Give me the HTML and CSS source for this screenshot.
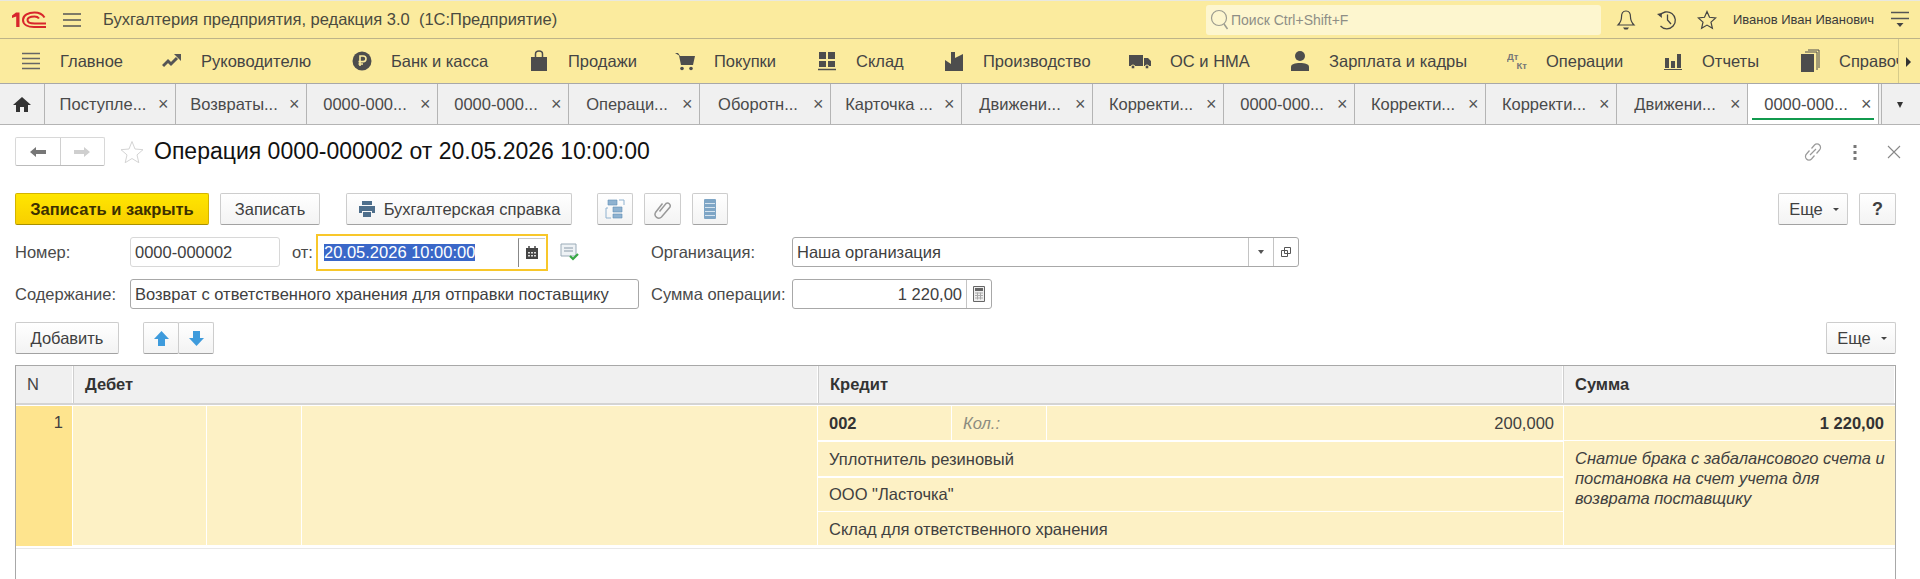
FILE: index.html
```html
<!DOCTYPE html>
<html lang="ru">

<head>
    <meta charset="UTF-8">
    <title>Операция 0000-000002</title>
    <link rel="stylesheet" href="styles.css">
</head>

<body>
    <header class="topBar">
        <svg class="logo" width="34" height="18" viewBox="0 0 34 18">
            <path d="M0 4.500 4 1.500h3.500V16H4.200V5.500L0 7z" fill="#d8262c" />
            <path d="M32.500 6.500C30.500 3.300 27 1.500 22.500 1.500 16.500 1.500 11 4 11 9s5.500 7 11 7H34" fill="none" stroke="#d8262c" stroke-width="2" />
            <path d="M27 7.500C26 6 24.500 5.500 22.500 5.500 19 5.500 15.500 6.500 15.500 9s3.500 3.500 7 3.500H34" fill="none" stroke="#d8262c" stroke-width="2" />
        </svg>
        <svg class="burger" width="18" height="14" viewBox="0 0 18 14"><path d="M0 1h18M0 7h18M0 13h18" stroke="#555" stroke-width="1.300" /></svg>
        <div class="appTitle">Бухгалтерия предприятия, редакция 3.0&nbsp; (1С:Предприятие)</div>
        <div class="searchBox">
            <svg width="21" height="23" viewBox="0 0 21 23"><circle cx="10" cy="10" r="7.500" fill="none" stroke="#9c9c90" stroke-width="1.200" /><path d="M15 16l3.500 5" stroke="#9c9c90" stroke-width="1.500" /></svg>
            <span>Поиск Ctrl+Shift+F</span>
        </div>
        <svg class="topIcon bell" width="20" height="22" viewBox="0 0 20 22"><path d="M10 2C6.500 2 5.500 5 5.500 8c0 4-1.500 6-3.500 8h16c-2-2-3.500-4-3.500-8 0-3-1-6-4.500-6z" fill="none" stroke="#444" stroke-width="1.200" /><path d="M7 18.500h6l-1.500 2h-3z" fill="#444" /></svg>
        <svg class="topIcon clock" width="22" height="22" viewBox="0 0 22 22"><path d="M3.500 7A8.500 8.500 0 1 1 4.500 17" fill="none" stroke="#444" stroke-width="1.300" /><path d="M1 5l4.500-1 .5 5z" fill="#444" /><path d="M11.500 5.500V11l3.500 4" fill="none" stroke="#444" stroke-width="1.300" /></svg>
        <svg class="topIcon star" width="20" height="20" viewBox="0 0 20 20"><path d="M10 1.500l2.500 5.800 6.200.6-4.700 4.200 1.400 6.200L10 15.100l-5.400 3.200L6 12.100 1.300 7.900l6.200-.6z" fill="none" stroke="#444" stroke-width="1.200" /></svg>
        <div class="userName">Иванов Иван Иванович</div>
        <svg class="topIcon settings" width="18" height="18" viewBox="0 0 18 18"><path d="M0 1.500h18M0 7.500h18" stroke="#555" stroke-width="1.300" /><path d="M5.500 12h7L9 16z" fill="#444" /></svg>
    </header>

    <nav class="menuBar">
        <div class="menuItem">
            <svg width="20" height="20" viewBox="0 0 20 20"><path d="M1 2.500h18M1 7.500h18M1 12.500h18M1 17.500h18" stroke="#666" stroke-width="1.300" /></svg>
            <span>Главное</span>
        </div>
        <div class="menuItem">
            <svg width="20" height="20" viewBox="0 0 20 20"><path d="M1 15l5-5 3 3 6-6" fill="none" stroke="#555" stroke-width="3" /><path d="M12 3h7v7z" fill="#555" /></svg>
            <span>Руководителю</span>
        </div>
        <div class="menuItem">
            <svg width="20" height="20" viewBox="0 0 20 20"><circle cx="10" cy="10" r="9.500" fill="#4d4d4d" /><path d="M8 15V5h3.200a2.800 2.800 0 0 1 0 5.600H6.500M6.500 13H11" fill="none" stroke="#fbeb9e" stroke-width="1.600" /></svg>
            <span>Банк и касса</span>
        </div>
        <div class="menuItem">
            <svg width="20" height="22" viewBox="0 0 20 22"><path d="M2 7h16v14H2z" fill="#4d4d4d" /><path d="M6.500 11V4a3.500 3 0 0 1 7 0v7" fill="none" stroke="#4d4d4d" stroke-width="1.500" /></svg>
            <span>Продажи</span>
        </div>
        <div class="menuItem">
            <svg width="20" height="20" viewBox="0 0 20 20"><path d="M0 2h3l2 3h15l-2 9H6L4 4.500z" fill="#4d4d4d" /><circle cx="7" cy="17.500" r="1.800" fill="#4d4d4d" /><circle cx="16" cy="17.500" r="1.800" fill="#4d4d4d" /></svg>
            <span>Покупки</span>
        </div>
        <div class="menuItem">
            <svg width="20" height="20" viewBox="0 0 20 20"><path d="M2 1h7v7H2zM11 1h7v7h-7zM2 10h7v6H2zM11 10h7v6h-7z" fill="#4d4d4d" /><path d="M1 18.500h18" stroke="#4d4d4d" stroke-width="1.500" /></svg>
            <span>Склад</span>
        </div>
        <div class="menuItem">
            <svg width="20" height="20" viewBox="0 0 20 20"><path d="M1 20V9l6 4V1h4v6l8-4v17z" fill="#4d4d4d" /></svg>
            <span>Производство</span>
        </div>
        <div class="menuItem">
            <svg width="22" height="20" viewBox="0 0 22 20"><path d="M0 4h14v11H0zM15 7h4l3 3v5h-7z" fill="#4d4d4d" /><circle cx="4" cy="16" r="2" fill="#4d4d4d" stroke="#fbeb9e" /><circle cx="18" cy="16" r="2" fill="#4d4d4d" stroke="#fbeb9e" /></svg>
            <span>ОС и НМА</span>
        </div>
        <div class="menuItem">
            <svg width="20" height="22" viewBox="0 0 20 22"><circle cx="10" cy="6" r="5" fill="#4d4d4d" /><path d="M1 21v-4c0-3 4-4 9-4s9 1 9 4v4z" fill="#4d4d4d" /></svg>
            <span>Зарплата и кадры</span>
        </div>
        <div class="menuItem">
            <div class="dtKt"><span>Дт</span><span>Кт</span></div>
            <span>Операции</span>
        </div>
        <div class="menuItem">
            <svg width="20" height="20" viewBox="0 0 20 20"><path d="M2 7h4v10H2zM8 10h4v7H8zM14 3h4v14h-4z" fill="#4d4d4d" /><path d="M1 18.500h18" stroke="#4d4d4d" /></svg>
            <span>Отчеты</span>
        </div>
        <div class="menuItem">
            <svg width="20" height="24" viewBox="0 0 20 24"><path d="M1 5h13v18H1z" fill="#4d4d4d" /><path d="M5 3h12v18M8 1h11v18" fill="none" stroke="#4d4d4d" /></svg>
            <span>Справочники</span>
        </div>
        <div class="menuArrow"></div>
    </nav>

    <div class="tabBar">
        <div class="homeTab">
            <svg width="18" height="16" viewBox="0 0 18 16"><path d="M9 1 0 9h3v7h4v-5h4v5h4V9h3z" fill="#333" /></svg>
        </div>
        <div class="tab"><span class="tabText">Поступле...</span><span class="tabClose">×</span></div>
        <div class="tab"><span class="tabText">Возвраты...</span><span class="tabClose">×</span></div>
        <div class="tab"><span class="tabText">0000-000...</span><span class="tabClose">×</span></div>
        <div class="tab"><span class="tabText">0000-000...</span><span class="tabClose">×</span></div>
        <div class="tab"><span class="tabText">Операци...</span><span class="tabClose">×</span></div>
        <div class="tab"><span class="tabText">Оборотн...</span><span class="tabClose">×</span></div>
        <div class="tab"><span class="tabText">Карточка ...</span><span class="tabClose">×</span></div>
        <div class="tab"><span class="tabText">Движени...</span><span class="tabClose">×</span></div>
        <div class="tab"><span class="tabText">Корректи...</span><span class="tabClose">×</span></div>
        <div class="tab"><span class="tabText">0000-000...</span><span class="tabClose">×</span></div>
        <div class="tab"><span class="tabText">Корректи...</span><span class="tabClose">×</span></div>
        <div class="tab"><span class="tabText">Корректи...</span><span class="tabClose">×</span></div>
        <div class="tab"><span class="tabText">Движени...</span><span class="tabClose">×</span></div>
        <div class="tab activeTab"><span class="tabText">0000-000...</span><span class="tabClose">×</span></div>
        <div class="tabMore"></div>
    </div>

    <main class="formView">
        <div class="titleRow">
            <div class="navButtons">
                <div class="navButton">
                    <svg width="16" height="10" viewBox="0 0 16 10"><path d="M0 5l6-5v3h10v4H6v3z" fill="#777" /></svg>
                </div>
                <div class="navButton">
                    <svg width="16" height="10" viewBox="0 0 16 10"><path d="M16 5l-6-5v3H0v4h10v3z" fill="#cfcfcf" /></svg>
                </div>
            </div>
            <svg class="titleStar" width="24" height="24" viewBox="0 0 24 24"><path d="M12 1.500l3 7.500 8 .7-6 5.200 1.800 7.800L12 18.500l-6.800 4.200L7 14.900 1 9.700 9 9z" fill="none" stroke="#d4d4d4" /></svg>
            <h1 class="formTitle">Операция 0000-000002 от 20.05.2026 10:00:00</h1>
            <div class="titleActions">
                <svg width="20" height="20" viewBox="0 0 20 20"><path d="M8.500 6.500l3-3.500a3.500 3.500 0 0 1 5 5l-3 3.500M11.500 13.500l-3 3.500a3.500 3.500 0 0 1-5-5l3-3.500M7 13l6-6" fill="none" stroke="#9a9a9a" stroke-width="1.200" /></svg>
                <svg width="6" height="18" viewBox="0 0 6 18"><path d="M1.500 2h3v3h-3zM1.500 8h3v3h-3zM1.500 14h3v3h-3z" fill="#777" /></svg>
                <svg width="14" height="14" viewBox="0 0 14 14"><path d="M1 1l12 12M13 1 1 13" stroke="#888" stroke-width="1.100" /></svg>
            </div>
        </div>

        <div class="toolbar">
            <button class="btn primaryBtn">Записать и закрыть</button>
            <button class="btn saveBtn">Записать</button>
            <button class="btn printBtn">
                <svg width="18" height="16" viewBox="0 0 18 16"><path d="M4 0h10v4H4zM1 5h16v7h-3v-2H4v2H1zM5 11h8v5H5z" fill="#4f6f8c" /></svg>
                Бухгалтерская справка
            </button>
            <button class="btn iconBtn structBtn">
                <svg width="20" height="20" viewBox="0 0 20 20"><path d="M3 1h9v5H3zM8 8h9v5H8zM8 15h9v4H8z" fill="#8fb2d0" stroke="#5f8db5" stroke-width=".6" /><path d="M3 9H1v10h5M14 1h5v5" fill="none" stroke="#8fb2d0" /></svg>
            </button>
            <button class="btn iconBtn clipBtn">
                <svg width="18" height="20" viewBox="0 0 18 20"><path d="M6 12l6.500-8a2.800 2.800 0 0 1 4 3.500L8 17.500a3.800 3.800 0 0 1-6-4.500L9 4" fill="none" stroke="#999" stroke-width="1.500" transform="translate(-.5 .5)" /></svg>
            </button>
            <button class="btn iconBtn listBtn">
                <svg width="12" height="20" viewBox="0 0 12 20"><path d="M0 1a1 1 0 0 1 1-1h10a1 1 0 0 1 1 1v18a1 1 0 0 1-1 1H1a1 1 0 0 1-1-1z" fill="#7fa6c6" /><path d="M1 4.500h10M1 8.500h10M1 12.500h10M1 16.500h10" stroke="#d6e4ef" /></svg>
            </button>
            <button class="btn moreBtn pushRight">Еще <i class="caret"></i></button>
            <button class="btn helpBtn">?</button>
        </div>

        <div class="fieldRow firstRow">
            <label class="fieldLabel numLabel">Номер:</label>
            <div class="field numField">0000-000002</div>
            <label class="fieldLabel dateLabel">от:</label>
            <div class="dateBox">
                <span class="selectedText">20.05.2026 10:00:00</span>
                <span class="dateBtn">
                    <svg width="12" height="13" viewBox="0 0 12 13"><path d="M0 2h12v11H0z" fill="#444" /><path d="M3 0v3M9 0v3" stroke="#444" stroke-width="1.500" /><path d="M2 6h2v1.500H2zM5 6h2v1.500H5zM8 6h2v1.500H8zM2 9h2v1.500H2zM5 9h2v1.500H5zM8 9h2v1.500H8z" fill="#ddd" /></svg>
                </span>
            </div>
            <svg class="postedIcon" width="20" height="18" viewBox="0 0 20 18"><path d="M1 1h15v12H1z" fill="#eef2f5" stroke="#9aabb8" /><path d="M4 5h9M4 8h9" stroke="#8a9aa8" /><path d="M10 13l3 3 5-5" fill="none" stroke="#38a845" stroke-width="2.200" /></svg>
            <label class="fieldLabel orgLabel">Организация:</label>
            <div class="field orgField">
                <span class="fieldValue">Наша организация</span>
                <span class="fieldBtn"><i class="smallArrow"></i></span>
                <span class="fieldBtn openBtn">
                    <svg width="10" height="10" viewBox="0 0 10 10"><path d="M3.500.5h6v6h-6zM.5 3.500h6v6h-6z" fill="#fff" stroke="#555" /></svg>
                </span>
            </div>
        </div>

        <div class="fieldRow secondRow">
            <label class="fieldLabel numLabel">Содержание:</label>
            <div class="field contentField">Возврат с ответственного хранения для отправки поставщику</div>
            <label class="fieldLabel orgLabel sumLabel">Сумма операции:</label>
            <div class="field sumField">
                <span class="fieldValue alignRight">1 220,00</span>
                <span class="fieldBtn calcBtn">
                    <svg width="12" height="16" viewBox="0 0 12 16"><path d="M.5.500h11v15H.5z" fill="#eee" stroke="#666" /><path d="M2 2h8v3H2z" fill="#666" /><path d="M2 7h8M2 9.500h8M2 12h8M4.500 6.500v7M7.500 6.500v7" stroke="#aaa" /></svg>
                </span>
            </div>
        </div>

        <div class="toolbar listToolbar">
            <button class="btn addBtn">Добавить</button>
            <div class="btnGroup">
                <button class="btn arrowBtn">
                    <svg width="15" height="15" viewBox="0 0 15 15"><path d="M7.500 0 15 8h-4v7H4V8H0z" fill="#3e9bdc" /></svg>
                </button>
                <button class="btn arrowBtn">
                    <svg width="15" height="15" viewBox="0 0 15 15"><path d="M7.500 15 15 7h-4V0H4v7H0z" fill="#3e9bdc" /></svg>
                </button>
            </div>
            <button class="btn moreBtn pushRight">Еще <i class="caret"></i></button>
        </div>

        <div class="gridTable">
            <div class="gridHead">
                <div class="headCell numHead">N</div>
                <div class="headCell">Дебет</div>
                <div class="headCell">Кредит</div>
                <div class="headCell">Сумма</div>
            </div>
            <div class="gridRow">
                <div class="lineNum">1</div>
                <div class="debitCols">
                    <div></div>
                    <div></div>
                    <div></div>
                </div>
                <div class="creditCol">
                    <div class="creditTop">
                        <div class="cell boldCell">002</div>
                        <div class="cell hintCell">Кол.:</div>
                        <div class="cell alignRight">200,000</div>
                    </div>
                    <div class="cell lineCell">Уплотнитель резиновый</div>
                    <div class="cell lineCell">ООО "Ласточка"</div>
                    <div class="cell">Склад для ответственного хранения</div>
                </div>
                <div class="sumCol">
                    <div class="cell boldCell sumCell">1 220,00</div>
                    <div class="commentCell">Снатие брака с забалансового счета и постановка на счет учета для возврата поставщику</div>
                </div>
            </div>
        </div>
    </main>
</body>

</html>
```

FILE: styles.css
```css
* {
    box-sizing: border-box;
}

html,
body {
    height: 100%;
}

body {
    margin: 0;
    overflow: hidden;
    background: #fff;
    color: #404040;
    font-family: "Liberation Sans", Arial, sans-serif;
    font-size: 16.5px;
    display: flex;
    flex-direction: column;
}

svg {
    display: block;
    flex: none;
}

/* top bar */
.topBar {
    height: 39px;
    flex: none;
    display: flex;
    align-items: center;
    background: #fbeb9e;
    border-top: 1px solid #e8e8e0;
    border-bottom: 1px solid #bdb488;
}

.logo {
    margin-left: 12px;
}

.burger {
    margin-left: 17px;
}

.appTitle {
    margin-left: 22px;
    width: 1103px;
    color: #4a4a40;
}

.searchBox {
    width: 395px;
    height: 30px;
    display: flex;
    align-items: center;
    padding-left: 3px;
    gap: 1px;
    background: #fdf6cf;
    border-radius: 3px;
    color: #8e8e86;
    font-size: 14px;
}

.topIcon.bell {
    margin-left: 15px;
}

.topIcon.clock {
    margin-left: 20px;
}

.topIcon.star {
    margin-left: 19px;
}

.userName {
    margin-left: 16px;
    width: 158px;
    font-size: 13px;
    color: #3c3c3c;
}

/* menu */
.menuBar {
    height: 45px;
    flex: none;
    display: grid;
    grid-template-columns: 141px 190px 177px 146px 142px 127px 185px 161px 217px 156px 137px 98px 21px;
    padding-left: 21px;
    background: #fbeb9e;
    border-bottom: 1px solid #a8a8a8;
    overflow: hidden;
}

.menuItem {
    display: flex;
    align-items: center;
    gap: 19px;
    color: #444;
    white-space: nowrap;
    overflow: hidden;
}

.menuArrow {
    border-left: 1px solid #d6cb8a;
    position: relative;
}

.menuArrow::after {
    content: "";
    position: absolute;
    left: 7px;
    top: 18px;
    border-left: 5px solid #333;
    border-top: 5px solid transparent;
    border-bottom: 5px solid transparent;
}

.dtKt {
    width: 20px;
    display: flex;
    flex-direction: column;
    font-size: 9.500px;
    font-weight: 700;
    line-height: 9px;
    color: #777;
}

.dtKt span:last-child {
    align-self: flex-end;
}

/* tabs */
.tabBar {
    height: 41px;
    flex: none;
    display: flex;
    background: #f0f0f0;
    border-bottom: 1px solid #b4b4b4;
}

.homeTab {
    width: 45px;
    display: flex;
    align-items: center;
    justify-content: center;
    border-right: 1px solid #b4b4b4;
}

.tab {
    width: 131px;
    display: flex;
    align-items: center;
    padding-left: 3px;
    border-right: 1px solid #b4b4b4;
    color: #4a4a4a;
}

.tabText {
    width: 110px;
    text-align: center;
    white-space: nowrap;
}

.tabClose {
    font-size: 18px;
    line-height: 18px;
    color: #555;
}

.activeTab {
    background: #fff;
    position: relative;
}

.activeTab::after {
    content: "";
    position: absolute;
    left: 4px;
    right: 4px;
    bottom: 4px;
    height: 2px;
    background: #119a4e;
}

.tabMore {
    flex: 1;
    margin-left: 2px;
    border-left: 1px solid #b4b4b4;
    position: relative;
}

.tabMore::after {
    content: "";
    position: absolute;
    left: 15px;
    top: 18px;
    border-top: 6px solid #333;
    border-left: 3.500px solid transparent;
    border-right: 3.500px solid transparent;
}

/* form */
.formView {
    flex: 1;
    min-height: 0;
    display: flex;
    flex-direction: column;
    padding: 12px 24px 0 15px;
}

.titleRow {
    height: 29px;
    flex: none;
    display: flex;
    align-items: center;
}

.navButtons {
    display: flex;
    width: 90px;
    height: 29px;
    border: 1px solid #d8d8d8;
    border-bottom-color: #bbb;
    border-radius: 2px;
}

.navButton {
    flex: 1;
    display: flex;
    align-items: center;
    justify-content: center;
}

.navButton:first-child {
    border-right: 1px solid #d0d0d0;
}

.titleStar {
    margin-left: 15px;
}

.formTitle {
    margin: 0 0 0 10px;
    font-size: 23px;
    font-weight: 400;
    color: #111;
}

.titleActions {
    margin-left: auto;
    display: flex;
    align-items: center;
    margin-right: -5px;
    gap: 29px;
}

.toolbar {
    height: 32px;
    flex: none;
    display: flex;
    margin-top: 27px;
}

.listToolbar {
    margin-top: 13px;
}

.btn {
    height: 32px;
    padding: 0;
    display: flex;
    align-items: center;
    justify-content: center;
    font: inherit;
    color: #404040;
    background: linear-gradient(#fff, #f3f3f3);
    border: 1px solid #cdcdcd;
    border-bottom-color: #a2a2a2;
    border-radius: 2px;
}

.primaryBtn {
    width: 194px;
    font-weight: 700;
    color: #3c3000;
    background: linear-gradient(#ffe600, #f8cf00);
    border-color: #d4b400;
    border-bottom-color: #a89000;
}

.saveBtn {
    width: 100px;
    margin-left: 11px;
}

.printBtn {
    width: 226px;
    margin-left: 26px;
    gap: 8px;
}

.iconBtn {
    width: 36px;
}

.structBtn {
    margin-left: 25px;
}

.clipBtn {
    width: 37px;
    margin-left: 11px;
}

.listBtn {
    margin-left: 11px;
}

.pushRight {
    margin-left: auto;
}

.moreBtn {
    width: 70px;
    gap: 10px;
    padding-left: 2px;
}

.caret {
    display: inline-block;
    border-top: 3px solid #444;
    border-left: 3px solid transparent;
    border-right: 3px solid transparent;
}

.helpBtn {
    width: 37px;
    margin-left: 11px;
    font-size: 18px;
    font-weight: 700;
}

.addBtn {
    width: 104px;
}

.btnGroup {
    display: flex;
    margin-left: 24px;
}

.arrowBtn {
    width: 36px;
}

.arrowBtn + .arrowBtn {
    margin-left: -1px;
}

.fieldRow {
    height: 30px;
    flex: none;
    display: flex;
    align-items: center;
}

.firstRow {
    margin-top: 12px;
}

.secondRow {
    margin-top: 12px;
}

.fieldLabel {
    flex: none;
    color: #4a4a4a;
}

.numLabel {
    width: 115px;
}

.dateLabel {
    width: 24px;
    margin-left: 12px;
}

.orgLabel {
    width: 141px;
}

.firstRow .orgLabel {
    margin-left: 71px;
}

.sumLabel {
    margin-left: 12px;
}

.field {
    height: 30px;
    flex: none;
    display: flex;
    align-items: center;
    padding-left: 4px;
    background: #fff;
    border: 1px solid #bdbdbd;
    border-radius: 3px;
    color: #404040;
    white-space: nowrap;
}

.numField {
    width: 150px;
    border-color: #d8d8d8;
}

.contentField {
    width: 509px;
    border-color: #a8a8a8;
}

.orgField {
    width: 507px;
    padding-right: 0;
    border-color: #a8a8a8;
}

.sumField {
    width: 200px;
    border-color: #a8a8a8;
}

.fieldValue {
    flex: 1;
}

.alignRight {
    text-align: right;
}

.fieldBtn {
    height: 100%;
    flex: none;
    display: flex;
    align-items: center;
    justify-content: center;
    border-left: 1px solid #c4c4c4;
}

.orgField .fieldBtn {
    width: 25px;
}

.smallArrow {
    border-top: 4px solid #555;
    border-left: 3px solid transparent;
    border-right: 3px solid transparent;
}

.calcBtn {
    width: 25px;
    margin-left: 4px;
}

.dateBox {
    width: 232px;
    height: 37px;
    flex: none;
    display: flex;
    align-items: center;
    justify-content: space-between;
    padding-left: 6px;
    border: 2px solid #f8c72a;
}

.selectedText {
    background: #3a67c8;
    color: #fff;
    line-height: 17px;
}

.dateBtn {
    width: 27px;
    height: 29px;
    margin-right: 1px;
    display: flex;
    align-items: center;
    justify-content: center;
    border-left: 1px solid #888;
    border-top: 1px solid #ccc;
}

.postedIcon {
    margin-left: 12px;
}

/* table */
.gridTable {
    flex: 1;
    margin-top: 11px;
    border: 1px solid #a8a8a8;
    border-bottom: 0;
}

.gridHead,
.gridRow {
    display: grid;
    grid-template-columns: 57px 745px 745px 1fr;
}

.gridHead {
    height: 39px;
    background: #f0f0f0;
    border-bottom: 2px solid #d4d4d4;
}

.headCell {
    display: flex;
    align-items: center;
    padding-left: 11px;
    font-weight: 700;
    color: #333;
    border-left: 1px solid #cfcfcf;
    border-right: 1px solid #fff;
}

.numHead {
    border-left: 0;
    font-weight: 400;
    color: #444;
}

.gridRow {
    height: 143px;
    margin-top: 1px;
    background: #fdf1c5;
    border-bottom: 1px solid #e8e8e8;
    box-shadow: inset 0 -3px 0 #fff;
}

.lineNum {
    height: 140px;
    padding: 7px 9px 0 0;
    text-align: right;
    background: #fee48e;
    border-right: 1px solid #fff;
}

.debitCols {
    height: 140px;
    display: grid;
    grid-template-columns: 133px 95px 1fr;
    border-right: 1px solid #fff;
}

.debitCols div + div {
    border-left: 1px solid #fff;
}

.creditCol {
    height: 140px;
    display: grid;
    grid-template-rows: 36px 36px 34px 34px;
}

.creditTop {
    display: grid;
    grid-template-columns: 133px 95px 1fr;
    border-bottom: 2px solid #fff;
}

.creditTop .cell + .cell {
    border-left: 1px solid #fff;
}

.cell {
    display: flex;
    align-items: center;
    padding: 0 9px 0 11px;
}

.cell.alignRight {
    justify-content: flex-end;
}

.lineCell {
    border-bottom: 2px solid #fff;
}

.lineCell + .lineCell {
    border-bottom-width: 1px;
}

.boldCell {
    font-weight: 700;
    color: #333;
}

.hintCell {
    font-style: italic;
    color: #8c8c80;
}

.sumCol {
    height: 140px;
    border-left: 1px solid #fff;
}

.sumCell {
    height: 35px;
    justify-content: flex-end;
    padding-right: 11px;
    border-bottom: 1px solid #fff;
}

.commentCell {
    padding: 7px 9px 0 11px;
    font-style: italic;
    line-height: 20px;
}
```
